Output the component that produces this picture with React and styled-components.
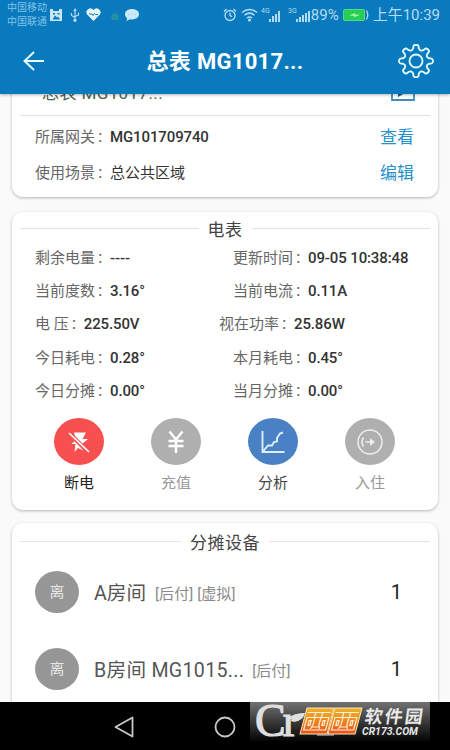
import styled, { createGlobalStyle } from 'styled-components'

const GlobalStyle = createGlobalStyle`
  * {
    box-sizing: border-box;
  }
  body {
    margin: 0;
    background: #fafafa;
    font-family: Roboto, 'Noto Sans CJK SC', sans-serif;
  }
`

const Page = styled.div`
  width: 450px;
  height: 750px;
  display: flex;
  flex-direction: column;
  overflow: hidden;
`

const Header = styled.header`
  height: 94px;
  flex: none;
  background: #087abd;
  color: #fff;
  z-index: 1;
  box-shadow: 0 1px 3px rgba(0, 0, 0, 0.3);
`

const StatusBar = styled.div`
  height: 29px;
  padding: 0 10px 0 7px;
  display: flex;
  align-items: center;
  color: #b5dcf5;
`

const Carriers = styled.div`
  width: 41px;
  font-size: 10px;
  line-height: 14px;
  white-space: nowrap;
  color: #85c0e8;
`

const StatusIcon = styled.svg`
  flex: none;
  margin-left: ${(props) => props.$gap || 0}px;
`

const StatusText = styled.span`
  font-size: ${(props) => props.$size}px;
  line-height: 28px;
  margin-left: ${(props) => props.$gap || 0}px;
  white-space: nowrap;
`

const Spacer = styled.div`
  flex: 1;
`

const TitleBar = styled.div`
  height: 64px;
  padding: 0 16px 0 23px;
  display: flex;
  align-items: center;
  justify-content: space-between;
`

const PageTitle = styled.h1`
  margin: 2px 0 0 7px;
  font-size: 22px;
  line-height: 28px;
  font-weight: 700;
  letter-spacing: 0.3px;
  white-space: nowrap;
`

const Content = styled.main`
  flex: 1;
  min-height: 0;
  overflow: hidden;
  padding: 0 12px;
  display: flex;
  flex-direction: column;
  background: #fafafa;
`

const Card = styled.section`
  flex: none;
  height: ${(props) => props.$height}px;
  margin-bottom: ${(props) => props.$gap || 0}px;
  padding: 0 8px;
  background: #fff;
  border-radius: 11px;
  box-shadow: 0 1px 3px rgba(0, 0, 0, 0.28);
`

const GatewayCard = styled(Card)`
  margin-top: -24px;
`

const MeterName = styled.div`
  height: 46px;
  padding: 11px 15px 0 22px;
  display: flex;
  justify-content: space-between;
  border-bottom: 1px solid #e2e2e2;
  font-size: 17px;
  line-height: 24px;
  letter-spacing: 0.4px;
  color: #4c6252;
`

const InfoRow = styled.div`
  height: 36px;
  padding: 0 16px 0 15px;
  display: flex;
  align-items: center;
  justify-content: space-between;
`

const InfoRows = styled.div`
  padding-top: 3px;
`

const Field = styled.div`
  display: flex;
  align-items: center;
  font-size: 15px;
  line-height: 22px;
  white-space: pre;
`

const Label = styled.span`
  color: #666;
`

const Colon = styled.span`
  width: 15px;
  padding-left: 2px;
  font-size: 13px;
  color: #666;
`

const Value = styled.span`
  font-weight: ${(props) => (props.$cjk ? 400 : 500)};
  letter-spacing: ${(props) => (props.$cjk ? 0 : -0.12)}px;
  color: #333;
`

const Link = styled.a`
  font-size: 17px;
  line-height: 24px;
  color: #2790c9;
`

const SectionTitle = styled.h2`
  margin: 0;
  height: ${(props) => props.$height || 36}px;
  display: flex;
  align-items: center;
  gap: 9px;
  font-size: 17px;
  font-weight: 400;
  letter-spacing: 0.5px;
  color: #444;
  &::before,
  &::after {
    content: '';
    flex: 1;
    height: 1px;
    background: #e4e4e4;
  }
`

const Readings = styled.div`
  display: flex;
  flex-direction: column;
  padding: 0 0 0 15px;
  margin-top: -4px;
`

const ReadingRow = styled.div`
  height: 33.3px;
  display: flex;
  align-items: center;
`

const ReadingColumn = styled.div`
  width: ${(props) => props.$width || 'auto'};
`

const Actions = styled.div`
  display: flex;
  padding: 11px 10.5px 0;
`

const Action = styled.div`
  width: 97px;
  display: flex;
  flex-direction: column;
  align-items: center;
  font-size: 15px;
  line-height: 22px;
  color: ${(props) => props.$color};
`

const ActionCircle = styled.div`
  width: 50px;
  height: 47px;
  margin-bottom: 7px;
  border-radius: 50%;
  display: flex;
  align-items: center;
  justify-content: center;
  background: ${(props) => props.$color};
`

const Devices = styled.div`
  margin-top: -6px;
`

const DeviceRow = styled.div`
  height: 77px;
  padding: 0 28px 0 15px;
  display: flex;
  align-items: center;
`

const Avatar = styled.div`
  width: 44px;
  height: 42px;
  margin-right: 15px;
  border-radius: 50%;
  background: #969696;
  color: #e6e6e6;
  font-size: 15px;
  line-height: 42px;
  text-align: center;
`

const DeviceName = styled.span`
  font-size: 19.6px;
  letter-spacing: ${(props) => props.$spacing || 0}px;
  color: #555;
  white-space: nowrap;
`

const DeviceTags = styled.span`
  flex: 1;
  margin: 2px 0 0 ${(props) => props.$gap}px;
  font-size: 15px;
  letter-spacing: 0.1px;
  color: #8a8a8a;
  white-space: nowrap;
`

const DeviceCount = styled.span`
  font-size: 20px;
  color: #222;
`

const NavBar = styled.nav`
  position: relative;
  height: 48px;
  flex: none;
  background: #000;
  display: flex;
  align-items: center;
  padding: 2px 0 0 114px;
  gap: 80px;
`

// sits over the right side of the navigation bar
const Watermark = styled.div`
  position: absolute;
  left: 250px;
  top: 0;
  width: 180px;
  height: 39px;
  background: linear-gradient(#727272, #3a3a3a 50%, #050505);
`

const readings = [
  ['剩余电量', '----', '更新时间', '09-05 10:38:48'],
  ['当前度数', '3.16°', '当前电流', '0.11A'],
  ['电 压', '225.50V', '视在功率', '25.86W', 184],
  ['今日耗电', '0.28°', '本月耗电', '0.45°'],
  ['今日分摊', '0.00°', '当月分摊', '0.00°'],
]

function Reading({ label, value, cjk }) {
  return (
    <Field>
      <Label>{label}</Label>
      <Colon>：</Colon>
      <Value $cjk={cjk}>{value}</Value>
    </Field>
  )
}

function SignalIcon({ label, gap, bars }) {
  return (
    <StatusIcon $gap={gap} width="22" height="18" fill="currentColor">
      <text x="0" y="7" fontSize="7">
        {label}
      </text>
      {bars.map((height, i) => (
        <rect key={i} x={8 + i * 3} y={16 - height} width="2" height={height} />
      ))}
    </StatusIcon>
  )
}

function PhoneStatus() {
  return (
    <StatusBar>
      <Carriers>
        中国移动
        <br />
        中国联通
      </Carriers>
      <StatusIcon $gap={1} width="14" height="14" viewBox="0 0 14 14">
        <path d="M1 1h3v2h6V1h3v12H1z" fill="#c9e6f8" />
        <path
          d="M3.5 11.5 6 7.5l2 2 1-1 2 3zM4 5h2v1.500H4zM8.500 5h2v1.500h-2z"
          fill="#087abd"
        />
      </StatusIcon>
      <StatusIcon $gap={7} width="10" height="14" viewBox="0 0 10 14">
        <path
          d="M5 1v11M1.500 5v2.500L5 9.500M8.500 4.500V7L5 8.500"
          fill="none"
          stroke="currentColor"
          strokeWidth="1.200"
        />
        <path d="M3.300 3 5 0l1.700 3z" fill="currentColor" />
        <circle cx="5" cy="12.300" r="1.600" fill="currentColor" />
      </StatusIcon>
      <StatusIcon $gap={6} width="15" height="13" viewBox="0 0 15 13">
        <path
          d="M7.500 13 1.300 6.700A3.800 3.800 0 0 1 7.500 2a3.800 3.800 0 0 1 6.200 4.700z"
          fill="#e3f5fc"
        />
        <path
          d="M3 6h3l1 1.500L8.500 5.500l1 1H12"
          fill="none"
          stroke="#087abd"
          strokeWidth="1"
        />
      </StatusIcon>
      <StatusIcon $gap={9} width="10" height="10" viewBox="0 0 10 10">
        <circle cx="5" cy="7" r="3.800" fill="#238fa6" />
      </StatusIcon>
      <StatusIcon $gap={4} width="16" height="14" viewBox="0 0 16 14">
        <path
          d="M8 1c4 0 7 2.200 7 5.200s-3 5.200-7 5.200l-2-.2L2.500 13l.6-3C1.800 9 1 7.700 1 6.200 1 3.200 4 1 8 1z"
          fill="#cbe8f9"
        />
        <path d="M4 6.500h1.200M7.400 6.500h1.200M10.800 6.500H12" stroke="#9acdeb" />
      </StatusIcon>
      <Spacer />
      <StatusIcon width="14" height="14" viewBox="0 0 14 14" fill="none">
        <circle cx="7" cy="7.500" r="5" stroke="currentColor" strokeWidth="1.300" />
        <path
          d="M7 4.500v3.200l2 1M1 3.500 3.500 1M13 3.500 10.500 1"
          stroke="currentColor"
          strokeWidth="1.300"
        />
      </StatusIcon>
      <StatusIcon $gap={4} width="17" height="14" viewBox="0 0 17 14" fill="none">
        <path
          d="M1 4.500c4.500-4 10.500-4 15 0M3.500 7.300c3-2.600 7-2.600 10 0M6 10c1.500-1.300 3.500-1.300 5 0"
          stroke="currentColor"
          strokeWidth="1.500"
        />
        <circle cx="8.500" cy="12" r="1.600" fill="currentColor" />
      </StatusIcon>
      <SignalIcon label="4G" gap={3} bars={[3, 6, 8, 11]} />
      <SignalIcon label="3G" gap={5} bars={[3, 5, 7, 9, 11]} />
      <StatusText $size={15} $gap={1}>
        89%
      </StatusText>
      <StatusIcon $gap={4} width="27" height="12" viewBox="0 0 27 12">
        <rect x=".5" y=".5" width="21" height="11" rx="1" fill="#25cf55" stroke="#5fd58c" />
        <path d="m6 6.500 6-2.500v1.500l5 .3-6 2.400V6.800z" fill="#a9f5a4" />
        <path d="M23.500 1.500q2.500 4.500 0 9" fill="none" stroke="currentColor" strokeWidth="1.300" />
      </StatusIcon>
      <StatusText $size={15} $gap={3}>
        上午10:39
      </StatusText>
    </StatusBar>
  )
}

function BackIcon() {
  return (
    <svg width="22" height="20" viewBox="0 0 22 20" fill="none" stroke="#e8fbff" strokeWidth="2">
      <path d="M21 10H1.500M11 1 1.500 10 11 19" />
    </svg>
  )
}

// eight rounded teeth around a ring, one curve per tooth and valley
function GearIcon() {
  const at = (degrees, radius) => {
    const angle = (degrees * Math.PI) / 180
    return `${(18 + radius * Math.sin(angle)).toFixed(1)} ${(17 - radius * 0.96 * Math.cos(angle)).toFixed(1)}`
  }
  let outline = `M${at(-12, 13.5)}`
  for (let i = 0; i < 8; i++) {
    const a = i * 45
    outline += `L${at(a - 9, 15.8)}Q${at(a - 7, 17)} ${at(a, 17)}Q${at(a + 7, 17)} ${at(a + 9, 15.8)}`
    outline += `L${at(a + 12, 13.5)}Q${at(a + 22.5, 10.5)} ${at(a + 33, 13.5)}`
  }
  return (
    <svg width="36" height="34" viewBox="0 0 36 34" fill="none" stroke="#e0f8ff" strokeWidth="1.900">
      <path d={`${outline}z`} strokeLinejoin="round" />
      <circle cx="18" cy="17" r="6.500" />
    </svg>
  )
}

function NoteIcon() {
  return (
    <svg width="24" height="20" viewBox="0 0 24 20" fill="none" stroke="#3d8dbd" strokeWidth="1.800">
      <path d="M1 1h22v18H1z" />
      <path d="M7 16V9l9 2z" fill="#245a80" stroke="none" />
    </svg>
  )
}

function PowerOffIcon() {
  return (
    <svg width="24" height="24" viewBox="0 0 24 24">
      <path d="M7 2.500h12l-3.500 6.500H21l-6 5 1.500 6.500-5.500-2.500L7.500 22l1-8H4.500L9 9.500z" fill="#fff" />
      <path d="m2 3 19 19" stroke="#f7504f" strokeWidth="4" />
      <path d="m2 3 20 19" stroke="#fff" strokeWidth="1.700" />
    </svg>
  )
}

function YenIcon() {
  return (
    <svg width="20" height="24" viewBox="0 0 20 24" fill="none" stroke="#fff" strokeWidth="2.400">
      <path d="m3.500 1.500 6.500 8 6.500-8M10 9v14M2.500 11h15M2.500 16h15" />
    </svg>
  )
}

function ChartIcon() {
  return (
    <svg width="24" height="24" viewBox="0 0 24 24" fill="none" stroke="#dcefff" strokeWidth="1.900">
      <path d="M1.500 1v21h22" />
      <path d="M2 21.500 7 15.500h4l2-3.500 3-.5V8l3-4.500 3-1" />
    </svg>
  )
}

function CheckInIcon() {
  return (
    <svg width="26" height="26" viewBox="0 0 26 26" fill="none" stroke="#eee" strokeWidth="1.500">
      <circle cx="13" cy="13" r="12" />
      <path d="M6.500 8.500q-3 4.500 0 9M8.500 13h7" strokeWidth="1.700" />
      <path d="m13 9 5 4-5 4z" fill="#eee" stroke="none" />
    </svg>
  )
}

const actions = [
  { label: '断电', icon: PowerOffIcon, circle: '#f7504f', color: '#222' },
  { label: '充值', icon: YenIcon, circle: '#afafaf', color: '#999' },
  { label: '分析', icon: ChartIcon, circle: '#4a80c4', color: '#444' },
  { label: '入住', icon: CheckInIcon, circle: '#afafaf', color: '#999' },
]

function SiteLogo() {
  return (
    <Watermark>
      <svg width="180" height="39" viewBox="0 0 180 39">
        <defs>
          <linearGradient id="tile" x1="0" y1="0" x2="0" y2="1">
            <stop offset="0" stopColor="#f0b429" />
            <stop offset="0.5" stopColor="#ee8620" />
            <stop offset="1" stopColor="#e9501c" />
          </linearGradient>
        </defs>
        <text
          x="5"
          y="33.500"
          fontSize="46"
          fontFamily="Liberation Serif, serif"
          letterSpacing="-3"
          fill="#dedede"
          stroke="#dedede"
          strokeWidth="1.200"
        >
          Cr
        </text>
        <path d="M41 19q2-9 14-8-2 8-11 9z" fill="#dedede" />
        <path d="M67 30h17v4H67z" fill="#777" />
        {[50, 78].map((x) => (
          <g key={x} transform={`translate(${x} 6) skewX(-15)`}>
            <path d="M7 0h27v26H7z" fill="url(#tile)" stroke="#ffe7b5" />
            <g fill="none" stroke="#fff3dc" strokeWidth="1.200">
              <path d="M9 4.500h23M9.500 9.500h22v12.500h-22zM17 5v5M24 5v5" />
              <path d="M17.500 10v7l-1.500 4M23.500 10v7l1.500 4M16 19h9" />
              <path d="M12.500 12.500h2v5h-2zM26.500 12.500h2v5h-2z" />
            </g>
          </g>
        ))}
        <text
          x="0"
          y="0"
          fontSize="18"
          fontWeight="700"
          fill="#e8e8e8"
          textLength="58"
          transform="translate(114 21) skewX(-8)"
        >
          软件园
        </text>
        <text
          x="112"
          y="32.500"
          fontSize="10"
          fontWeight="700"
          fontStyle="italic"
          fill="#e8e8e8"
          textLength="56"
          lengthAdjust="spacingAndGlyphs"
        >
          CR173.COM
        </text>
      </svg>
    </Watermark>
  )
}

export default function App() {
  return (
    <>
      <GlobalStyle />
      <Page>
        <Header>
          <PhoneStatus />
          <TitleBar>
            <BackIcon />
            <PageTitle>总表 MG1017...</PageTitle>
            <GearIcon />
          </TitleBar>
        </Header>
        <Content>
          <GatewayCard $height={127} $gap={15}>
            <MeterName>
              <span>总表 MG1017...</span>
              <NoteIcon />
            </MeterName>
            <InfoRows>
              <InfoRow>
                <Reading label="所属网关" value="MG101709740" />
                <Link>查看</Link>
              </InfoRow>
              <InfoRow>
                <Reading label="使用场景" value="总公共区域" cjk />
                <Link>编辑</Link>
              </InfoRow>
            </InfoRows>
          </GatewayCard>
          <Card $height={298} $gap={13}>
            <SectionTitle $height={33}>电表</SectionTitle>
            <Readings>
              {readings.map(([label, value, label2, value2, width = 198]) => (
                <ReadingRow key={label}>
                  <ReadingColumn $width={`${width}px`}>
                    <Reading label={label} value={value} />
                  </ReadingColumn>
                  <Reading label={label2} value={value2} />
                </ReadingRow>
              ))}
            </Readings>
            <Actions>
              {actions.map(({ label, icon: Icon, circle, color }) => (
                <Action key={label} $color={color}>
                  <ActionCircle $color={circle}>
                    <Icon />
                  </ActionCircle>
                  {label}
                </Action>
              ))}
            </Actions>
          </Card>
          <Card $height={220}>
            <SectionTitle>分摊设备</SectionTitle>
            <Devices>
              <DeviceRow>
                <Avatar>离</Avatar>
                <DeviceName>A房间</DeviceName>
                <DeviceTags $gap={9}>[后付] [虚拟]</DeviceTags>
                <DeviceCount>1</DeviceCount>
              </DeviceRow>
              <DeviceRow>
                <Avatar>离</Avatar>
                <DeviceName $spacing={0.3}>B房间 MG1015...</DeviceName>
                <DeviceTags $gap={8}>[后付]</DeviceTags>
                <DeviceCount>1</DeviceCount>
              </DeviceRow>
            </Devices>
          </Card>
        </Content>
        <NavBar>
          <svg width="20" height="22" viewBox="0 0 20 22" fill="none" stroke="#c9c9c9" strokeWidth="1.800">
            <path d="M18.500 1.500v19L1.500 11z" strokeLinejoin="round" />
          </svg>
          <svg width="22" height="22" viewBox="0 0 22 22" fill="none" stroke="#c9c9c9" strokeWidth="1.800">
            <circle cx="11" cy="11" r="9.500" />
          </svg>
          <SiteLogo />
        </NavBar>
      </Page>
    </>
  )
}
